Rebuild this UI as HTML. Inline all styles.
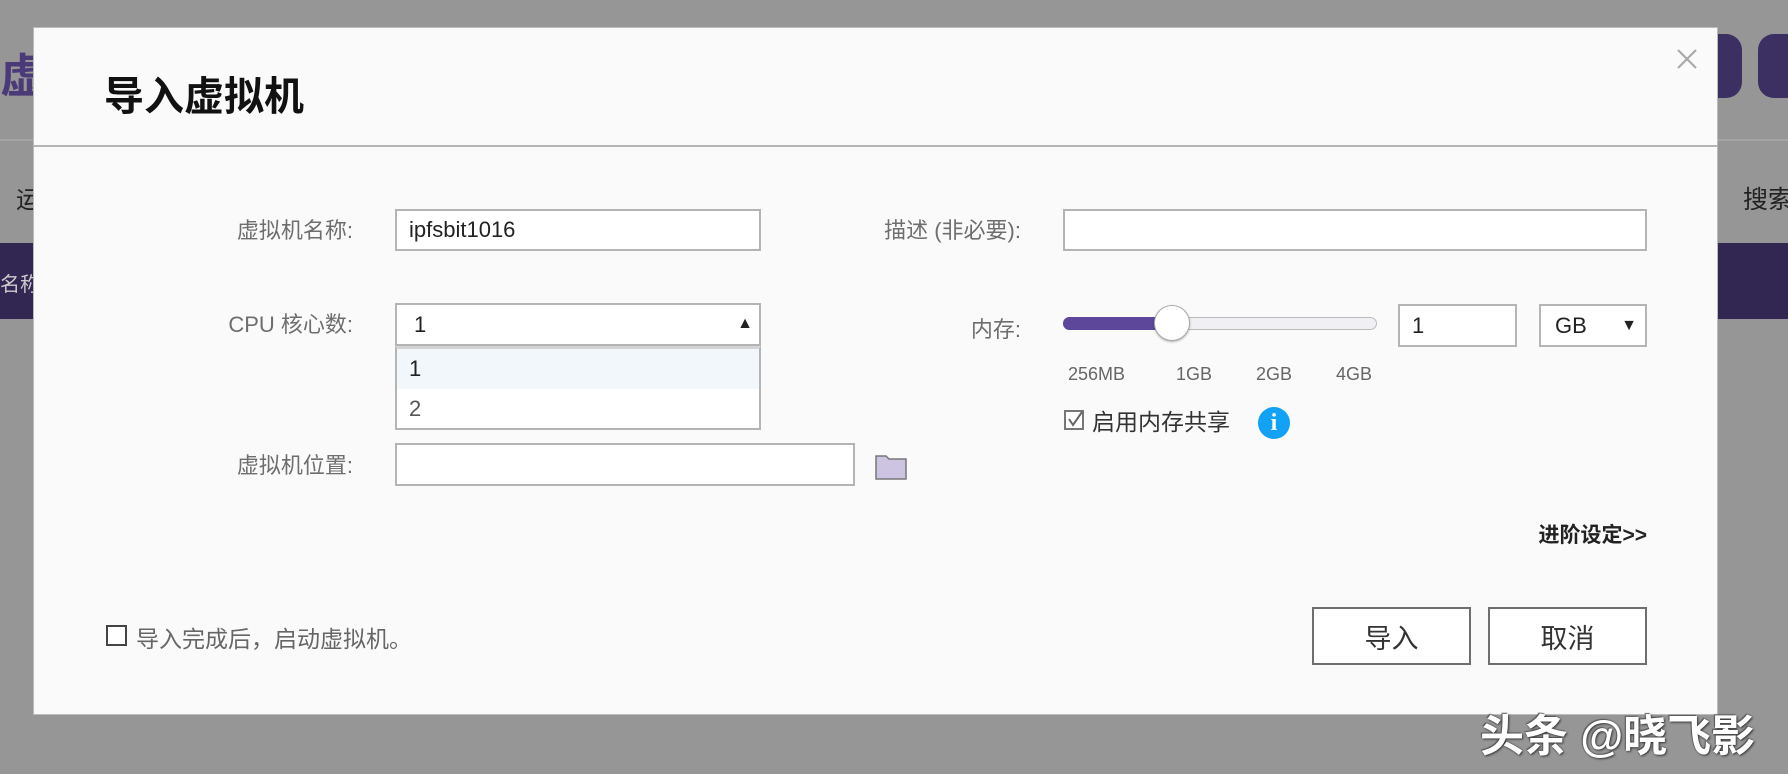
<!DOCTYPE html>
<html><head><meta charset="utf-8"><style>
*{margin:0;padding:0;box-sizing:border-box}
body{width:1788px;height:774px;overflow:hidden;background:#969696;position:relative;font-family:"Liberation Sans","Noto Sans CJK SC",sans-serif;}
.a{position:absolute;white-space:nowrap}
.lbl{position:absolute;color:#6e6e6e;font-size:22px;text-align:right;width:300px;line-height:26px;white-space:nowrap}
.inp{position:absolute;border:2px solid #b4b4b4;background:#fff;font-size:22px;color:#222;padding-left:12px;display:flex;align-items:center}
.btn{position:absolute;border:2px solid #6e6e6e;background:#fff;font-size:27px;color:#333;display:flex;align-items:center;justify-content:center}
</style></head><body>
<div class="a" style="left:0;top:40px;font-size:46px;color:#4a3a78;font-weight:bold;">虚</div>
<div class="a" style="left:0;top:139px;width:1788px;height:2px;background:#a4a4a4"></div>
<div class="a" style="left:16px;top:180px;font-size:24px;color:#222">运</div>
<div class="a" style="left:1743px;top:180px;font-size:25px;color:#222">搜索</div>
<div class="a" style="left:0;top:243px;width:1788px;height:76px;background:#322652"></div>
<div class="a" style="left:0;top:268px;font-size:20px;color:#ccc">名称</div>
<div class="a" style="left:1690px;top:34px;width:52px;height:64px;border-radius:16px;background:#3c2f62"></div>
<div class="a" style="left:1758px;top:34px;width:60px;height:64px;border-radius:16px;background:#3c2f62"></div>
<div class="a" style="left:33px;top:27px;width:1685px;height:688px;background:#fafafa;border:1px solid #bbb"></div>
<div class="a" style="left:104px;top:64px;font-size:40px;font-weight:bold;color:#111">导入虚拟机</div>
<svg class="a" style="left:1677px;top:49px" width="20" height="20"><path d="M1 1L19 19M19 1L1 19" stroke="#aaa" stroke-width="2.2"/></svg>
<div class="a" style="left:34px;top:145px;width:1684px;height:2px;background:#b4b4b4"></div>

<div class="lbl" style="left:53px;top:218px">虚拟机名称:</div>
<div class="inp" style="left:395px;top:209px;width:366px;height:42px">ipfsbit1016</div>
<div class="lbl" style="left:721px;top:218px">描述 (非必要):</div>
<div class="inp" style="left:1063px;top:209px;width:584px;height:42px"></div>

<div class="lbl" style="left:53px;top:312px">CPU 核心数:</div>
<div class="inp" style="left:395px;top:303px;width:366px;height:43px;padding-left:17px">1<span class="a" style="right:6px;top:10px;font-size:16px">▲</span></div>
<div class="a" style="left:395px;top:346px;width:366px;height:84px;border:2px solid #b4b4b4;border-top:3px solid #d4d4d4;background:#fff">
<div style="height:40px;background:#f1f7fa;font-size:22px;color:#222;padding-left:12px;line-height:40px">1</div>
<div style="height:39px;font-size:22px;color:#555;padding-left:12px;line-height:39px">2</div>
</div>

<div class="lbl" style="left:721px;top:317px">内存:</div>
<div class="a" style="left:1063px;top:317px;width:314px;height:13px;border:1px solid #bbb;border-radius:7px;background:#f0f0f4"></div>
<div class="a" style="left:1063px;top:317px;width:110px;height:13px;border-radius:7px 0 0 7px;background:#5c479a"></div>
<div class="a" style="left:1154px;top:305px;width:36px;height:36px;border-radius:50%;background:#fff;border:1px solid #aaa;box-shadow:0 1px 2px rgba(0,0,0,.3)"></div>
<div class="inp" style="left:1398px;top:304px;width:119px;height:43px">1</div>
<div class="inp" style="left:1539px;top:304px;width:108px;height:43px;padding-left:14px">GB<span class="a" style="right:8px;top:11px;font-size:16px">▼</span></div>
<div class="a" style="left:1068px;top:364px;font-size:18px;color:#666">256MB</div>
<div class="a" style="left:1176px;top:364px;font-size:18px;color:#666">1GB</div>
<div class="a" style="left:1256px;top:364px;font-size:18px;color:#666">2GB</div>
<div class="a" style="left:1336px;top:364px;font-size:18px;color:#666">4GB</div>
<div class="a" style="left:1064px;top:410px;width:20px;height:20px;border:2px solid #777;background:#fff"></div>
<svg class="a" style="left:1066px;top:410px" width="18" height="18"><path d="M3 9l4 6L16 2" stroke="#666" stroke-width="2" fill="none"/></svg>
<div class="a" style="left:1092px;top:403px;font-size:23px;color:#333">启用内存共享</div>
<div class="a" style="left:1258px;top:407px;width:32px;height:32px;border-radius:50%;background:#11a2f5;color:#fff;font-weight:bold;font-size:24px;text-align:center;line-height:32px;font-family:'Liberation Serif',serif">i</div>

<div class="lbl" style="left:53px;top:453px">虚拟机位置:</div>
<div class="inp" style="left:395px;top:443px;width:460px;height:43px"></div>
<svg class="a" style="left:875px;top:452px" width="32" height="28"><path d="M1 4h10l3 3h17v20H1z" fill="#ccc4e0" stroke="#777" stroke-width="1.5"/></svg>

<div class="a" style="right:141px;top:519px;font-size:21px;font-weight:bold;color:#222">进阶设定&gt;&gt;</div>
<div class="a" style="left:106px;top:625px;width:21px;height:21px;border:2px solid #444;background:#fff"></div>
<div class="a" style="left:136px;top:620px;font-size:23px;color:#666">导入完成后，启动虚拟机。</div>
<div class="btn" style="left:1312px;top:607px;width:159px;height:58px">导入</div>
<div class="btn" style="left:1488px;top:607px;width:159px;height:58px">取消</div>

<div class="a" style="left:1480px;top:700px;font-size:44px;font-weight:bold;color:#fff;text-shadow:1px 1px 2px #333,-1px -1px 1px #555">头条 @晓飞影</div>
</body></html>
